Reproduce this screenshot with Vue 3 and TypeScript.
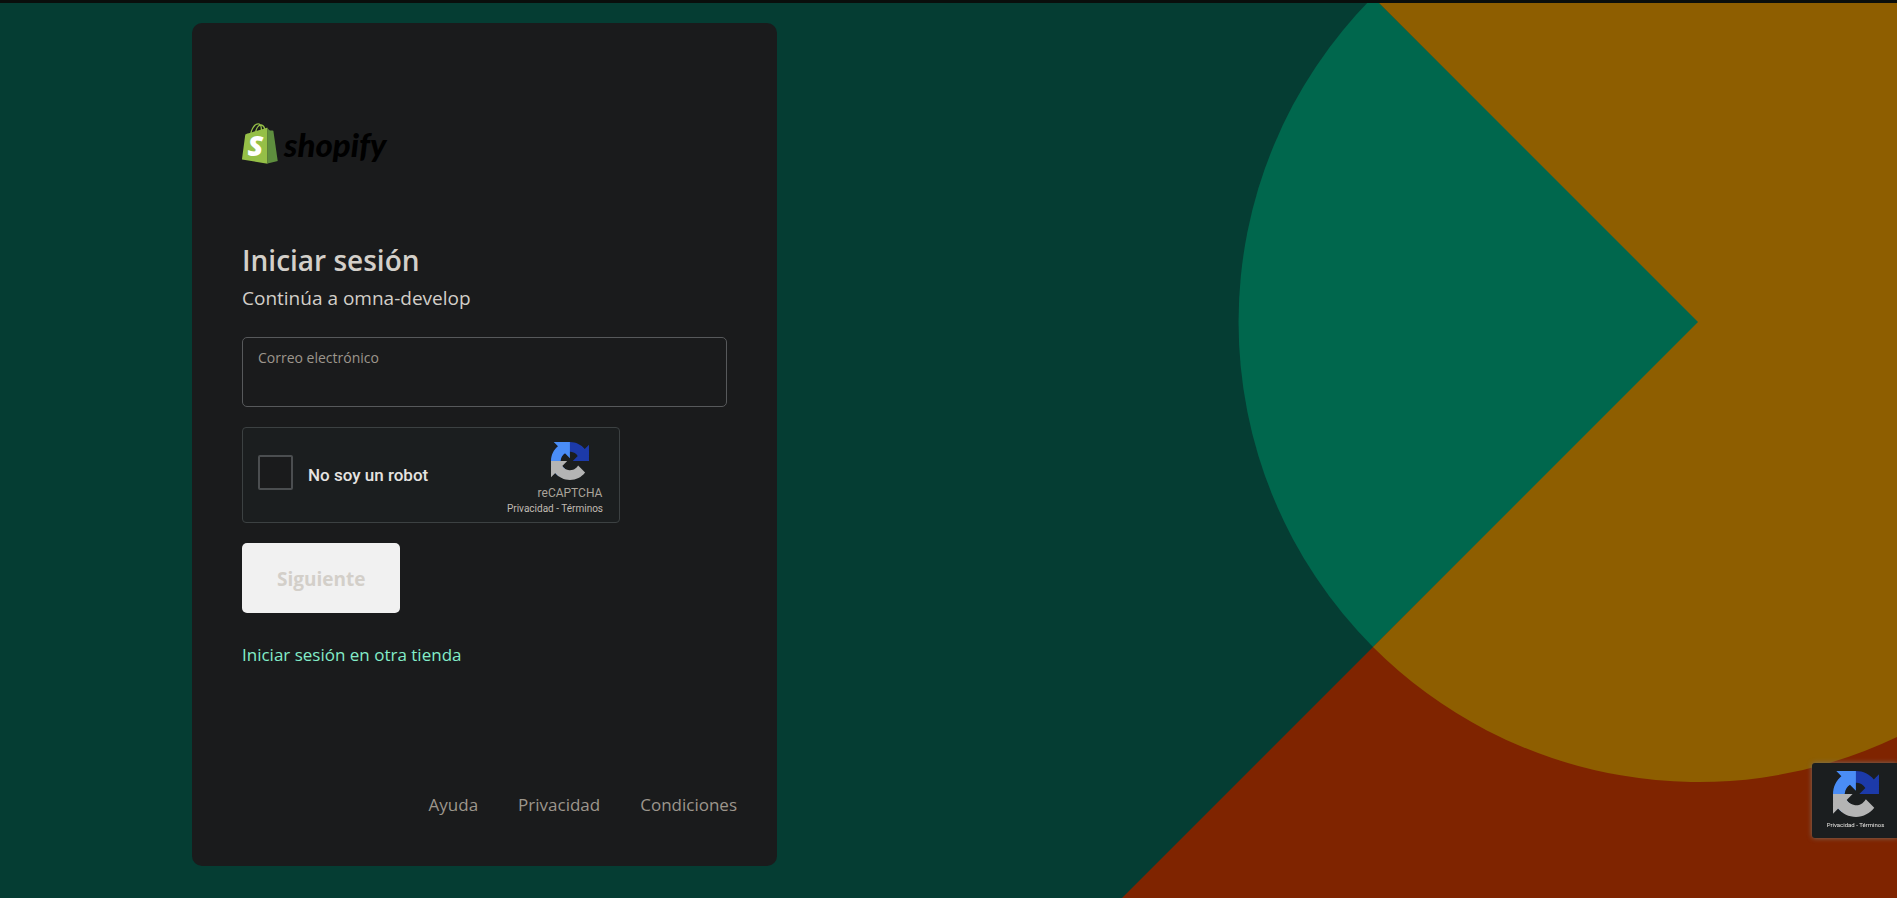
<script setup lang="ts">
import { ref } from 'vue'

interface FooterLink {
  label: string
  href: string
}

const email = ref('')
const human = ref(false)

const footerLinks: FooterLink[] = [
  { label: 'Ayuda', href: '#ayuda' },
  { label: 'Privacidad', href: '#privacidad' },
  { label: 'Condiciones', href: '#condiciones' },
]
</script>

<template>
  <div class="page">
    <svg width="0" height="0" class="defs" aria-hidden="true">
      <symbol id="recaptcha-mark" viewBox="0 0 64 64">
        <path fill="#1c3aa9" d="M64 31.955l-.033-1.37V4.687l-7.16 7.16C50.948 4.674 42.033.093 32.05.093c-10.4 0-19.622 4.96-25.458 12.64l11.736 11.86a15.55 15.55 0 0 1 4.754-5.334c2.05-1.6 4.952-2.906 8.968-2.906.485 0 .86.057 1.135.163 4.976.393 9.288 3.14 11.828 7.124l-8.307 8.307L64 31.953" />
        <path fill="#4a8df6" d="M31.862.094l-1.37.033H4.594l7.16 7.16C4.58 13.147 0 22.06 0 32.046c0 10.4 4.96 19.622 12.64 25.458L24.5 45.768a15.55 15.55 0 0 1-5.334-4.754c-1.6-2.05-2.906-4.952-2.906-8.968 0-.485.057-.86.163-1.135.393-4.976 3.14-9.288 7.124-11.828l8.307 8.307L31.86.095" />
        <path fill="#b4b4b4" d="M.001 32.045l.033 1.37v25.898l7.16-7.16c5.86 7.173 14.774 11.754 24.76 11.754 10.4 0 19.622-4.96 25.458-12.64l-11.736-11.86a15.55 15.55 0 0 1-4.754 5.334c-2.05 1.6-4.952 2.906-8.968 2.906-.485 0-.86-.057-1.135-.163-4.976-.393-9.288-3.14-11.828-7.124l8.307-8.307c-10.522.04-22.4.066-27.295-.005" />
      </symbol>
    </svg>

    <svg class="backdrop" viewBox="0 0 1897 898" preserveAspectRatio="xMaxYMin slice" aria-hidden="true">
      <rect width="1897" height="898" fill="#053d33" />
      <path d="M1122 898L1698 322H1897V898Z" fill="#7f2400" />
      <path d="M1700 322L1373 647A460 460 0 0 1 1373 -3Z" fill="#00674d" />
      <path d="M1698 322L1373 -3H1897V737A460 460 0 0 1 1373 647Z" fill="#8e5e00" />
    </svg>

    <div class="topbar"></div>

    <main class="card">
      <header class="logo" aria-label="shopify">
        <svg class="bag" viewBox="0 0 110 125" aria-hidden="true">
          <path fill="#95bf47" d="M74.700 14.800s-1.400.4-3.700 1.100c-.4-1.300-1-2.800-1.800-4.400-2.600-5-6.500-7.700-11.100-7.700-.3 0-.6 0-1 .1-.1-.2-.3-.3-.4-.5-2-2.200-4.600-3.200-7.700-3.100-6 .2-12 4.500-16.800 12.200-3.400 5.400-6 12.200-6.700 17.500-6.900 2.100-11.700 3.600-11.800 3.700-3.500 1.100-3.600 1.200-4 4.500C9.400 40.700.2 111.200.2 111.200l77.900 13.200V14.600c-2.900.1-3.200.1-3.400.2zM57.200 20.200c-4 1.200-8.400 2.600-12.700 3.900 1.200-4.700 3.600-9.400 6.400-12.500 1.100-1.100 2.600-2.400 4.300-3.200 1.700 3.600 2.100 8.500 2 11.800zM49.100 4.300c1.400 0 2.600.3 3.600.9-1.600.8-3.200 2.100-4.700 3.600-3.800 4.100-6.700 10.500-7.900 16.600-3.600 1.100-7.200 2.200-10.500 3.200C31.700 18.900 39.800 4.600 49.100 4.300zM61.200 19c0-3-.4-7.200-1.800-10.800 4.500.9 6.700 6 7.700 9.100z" />
          <path fill="#5e8e3e" d="M78.100 123.900l31.400-7.800S96 24.800 95.900 24.200c-.1-.6-.6-1-1.100-1s-9.300-.2-9.300-.2-5.400-5.200-7.400-7.200z" />
          <text x="17" y="102" class="bag-letter">S</text>
        </svg>
        <span class="wordmark">shopify</span>
      </header>

      <h1>Iniciar sesión</h1>
      <p class="subtitle">Continúa a omna-develop</p>

      <form @submit.prevent>
        <div class="field">
          <label for="email">Correo electrónico</label>
          <input id="email" v-model="email" type="email" autocomplete="username" />
        </div>

        <div class="captcha">
          <input id="human" v-model="human" type="checkbox" />
          <label for="human">No soy un robot</label>
          <div class="captcha-brand">
            <svg class="captcha-icon" aria-hidden="true"><use href="#recaptcha-mark" /></svg>
            <span class="captcha-name">reCAPTCHA</span>
            <span class="captcha-legal"><a href="#privacidad">Privacidad</a> - <a href="#terminos">Términos</a></span>
          </div>
        </div>

        <button type="submit">Siguiente</button>
      </form>

      <a class="other-store" href="#tienda">Iniciar sesión en otra tienda</a>

      <footer>
        <a v-for="link in footerLinks" :key="link.label" :href="link.href">{{ link.label }}</a>
      </footer>
    </main>

    <aside class="badge">
      <svg class="badge-icon" aria-hidden="true"><use href="#recaptcha-mark" /></svg>
      <span class="badge-legal"><a href="#privacidad">Privacidad</a> - <a href="#terminos">Términos</a></span>
    </aside>
  </div>
</template>

<style>
body {
  background: #053d33;
}
</style>

<style scoped>
.page {
  position: relative;
  min-height: 100vh;
  overflow: hidden;
  font-family: "Open Sans", "Noto Sans", sans-serif;
  color: #d3cfc9;
}

.page *,
.page {
  box-sizing: border-box;
}

.defs {
  position: absolute;
}

.backdrop {
  position: absolute;
  inset: 0;
  width: 100%;
  height: 100%;
}

.topbar {
  position: relative;
  height: 3px;
  background: #0a0e0c;
}

.card {
  position: relative;
  display: flex;
  flex-direction: column;
  width: 585px;
  max-width: 100%;
  min-height: calc(100vh - 55px);
  margin: 20px 0 32px 192px;
  padding: 100px 50px 40px;
  border-radius: 10px;
  background: #1a1b1c;
}

.logo {
  display: flex;
  align-items: center;
  gap: 6px;
  height: 41px;
}

.bag {
  width: 36px;
  height: 41px;
}

.bag-letter {
  font: italic 800 88px "Open Sans", sans-serif;
  fill: #fff;
}

.wordmark {
  font: italic 900 33px/44px Lato, sans-serif;
  color: #000;
}

h1 {
  margin: 76px 0 0;
  font-size: 28px;
  font-weight: 600;
  line-height: 40px;
}

.subtitle {
  margin: 4px 0 0;
  font-size: 19px;
  line-height: 28px;
}

form {
  display: flex;
  flex-direction: column;
  align-items: flex-start;
  gap: 20px;
  margin-top: 25px;
}

.field {
  display: flex;
  flex-direction: column;
  width: 100%;
  height: 70px;
  padding: 10px 15px;
  border: 1px solid #57595b;
  border-radius: 5px;
}

.field:focus-within {
  border-color: #8cf0cf;
}

.field label {
  font-size: 14px;
  line-height: 20px;
  color: #9d968c;
}

.field input {
  width: 100%;
  height: 28px;
  padding: 0;
  border: 0;
  outline: 0;
  background: transparent;
  color: inherit;
  font: inherit;
}

.captcha {
  display: flex;
  align-items: flex-start;
  width: 378px;
  max-width: 100%;
  height: 96px;
  padding: 0 15px;
  border: 1px solid #3c4142;
  border-radius: 4px;
  background: #1b1e1f;
  font-family: Roboto, sans-serif;
}

.captcha input {
  appearance: none;
  width: 35px;
  height: 35px;
  margin: 27px 0 0;
  border: 2px solid #4b4e50;
  border-radius: 2px;
  background: #1a1b1c;
}

.captcha input:checked {
  background: #4a8df6;
}

.captcha label {
  margin-left: 15px;
  font-size: 17px;
  font-weight: 500;
  line-height: 94px;
  color: #e6e4e1;
}

.captcha-brand {
  display: flex;
  flex-direction: column;
  align-items: center;
  width: 98px;
  margin-left: auto;
  padding-top: 14px;
}

.captcha-icon {
  width: 38px;
  height: 38px;
  margin-left: 30px;
}

.captcha-name {
  margin: 4px 0 0 30px;
  font-size: 12px;
  line-height: 18px;
  color: #aaa49b;
}

.captcha-legal {
  font-size: 10px;
  line-height: 14px;
  white-space: nowrap;
  color: #c0bbb3;
}

a {
  color: inherit;
  text-decoration: none;
}

button {
  height: 70px;
  padding: 2px 35px 0;
  border: 0;
  border-radius: 5px;
  background: #f1f1f1;
  color: #d3cfc9;
  font: 700 19px "Open Sans", "Noto Sans", sans-serif;
}

.other-store {
  align-self: flex-start;
  margin-top: 28px;
  font-size: 17px;
  line-height: 28px;
  color: #83edc9;
}

footer {
  display: flex;
  justify-content: flex-end;
  gap: 40px;
  margin: auto -10px 0 0;
  padding-bottom: 7px;
  font-size: 17px;
  font-weight: 500;
  line-height: 28px;
  color: #9d968c;
}

.badge {
  position: fixed;
  right: 0;
  bottom: 60px;
  display: flex;
  flex-direction: column;
  align-items: center;
  width: 85px;
  height: 75px;
  padding: 8px 0 0 2px;
  border-radius: 3px 0 0 3px;
  background: #1b1e1f;
  box-shadow: 0 0 5px #7b7468;
  font-family: Roboto, sans-serif;
}

.badge-icon {
  width: 46px;
  height: 46px;
}

.badge-legal {
  margin-top: 3px;
  font-size: 6px;
  line-height: 10px;
  white-space: nowrap;
  color: #e6e4e1;
}
</style>
